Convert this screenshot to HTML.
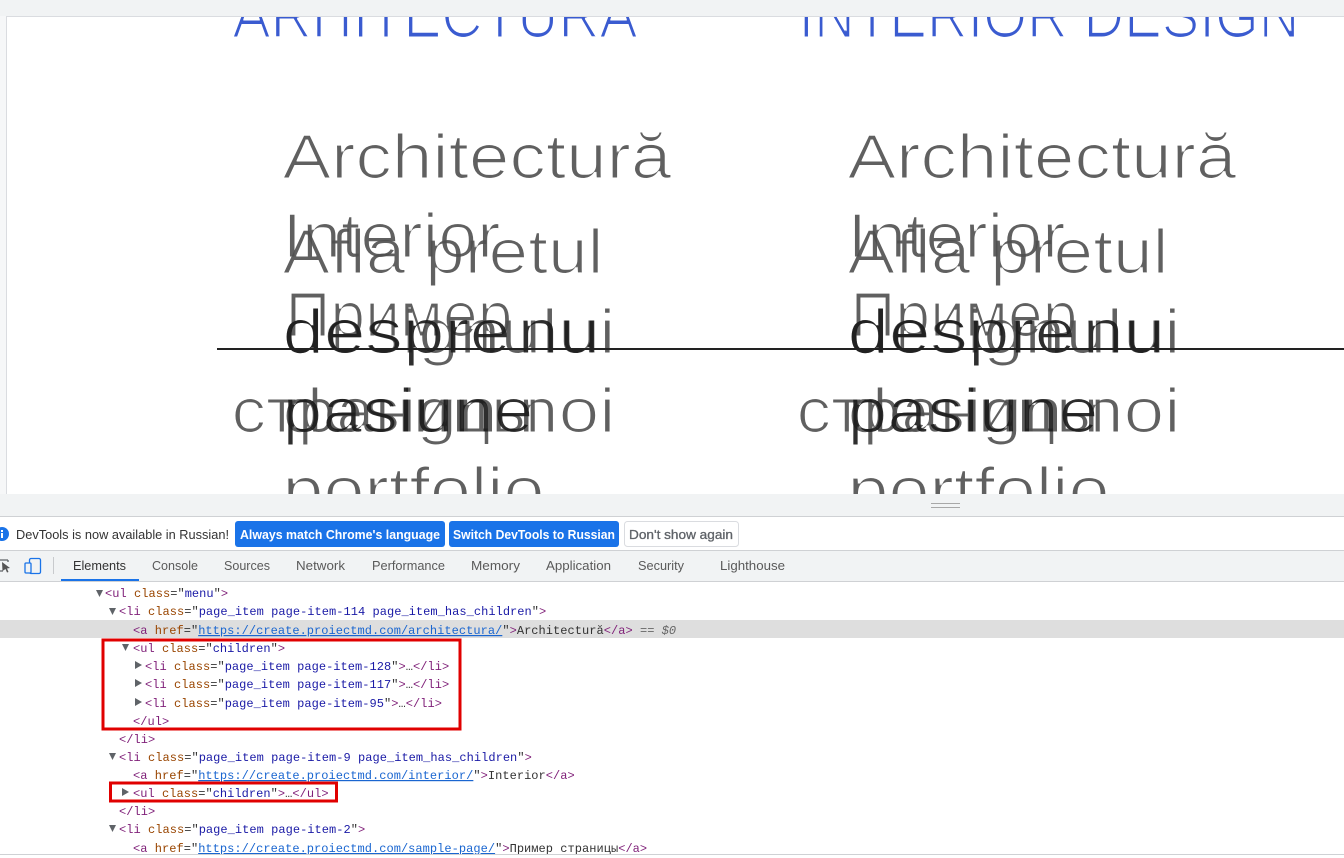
<!DOCTYPE html>
<html><head><meta charset="utf-8"><title>DevTools</title>
<style>
html,body{margin:0;padding:0;background:#fff;width:1344px;height:858px;overflow:hidden}
svg{display:block}
.g{font:62px "Liberation Sans","Noto Sans CJK JP",sans-serif;fill:#4f4f4f;fill-opacity:.9;filter:url(#thin)}
.d{font:62px "Liberation Sans",sans-serif;fill:#1c1c1c;fill-opacity:.92;filter:url(#thin);word-spacing:-12px}
.h{font:62px "Liberation Sans",sans-serif;fill:#3a5bd0;filter:url(#thin)}
.u{font:12.5px "Liberation Sans",sans-serif;fill:#333}
.t{font:12.5px "Liberation Sans",sans-serif;fill:#5a5a5a}
.b{font:bold 12.5px "Liberation Sans",sans-serif;fill:#fff}
.m{font:12px "Liberation Mono",monospace;fill:#333;letter-spacing:.04px;white-space:pre}
.p{fill:#7f1f78}.a{fill:#994500}.v{fill:#1a1aa6}.l{fill:#1a66d0;text-decoration:underline}
.tri{fill:#5f6368}
</style></head><body>
<svg width="1344" height="858" viewBox="0 0 1344 858" xmlns="http://www.w3.org/2000/svg">
<defs>
<filter id="thin" x="-5%" y="-20%" width="110%" height="140%" color-interpolation-filters="sRGB">
<feMorphology operator="erode" radius="1 0.5"/>
<feGaussianBlur stdDeviation="0.25"/>
</filter>
<clipPath id="c"><rect x="7" y="17" width="1337" height="477"/></clipPath>
</defs>
<rect width="1344" height="858" fill="#fff"/>
<rect width="1344" height="16" fill="#f1f3f4"/>
<rect y="16" width="1344" height="1" fill="#dadce0"/>
<rect x="0" y="16" width="6" height="478" fill="#f6f7f8"/>
<rect x="6" y="16" width="1" height="478" fill="#dadce0"/>
<g clip-path="url(#c)">
<g>
<text class="h" x="232.500" y="37" textLength="405" lengthAdjust="spacingAndGlyphs">ARHITECTURA</text>
<text class="g" x="282.500" y="178" textLength="389" lengthAdjust="spacingAndGlyphs">Architectură</text>
<text class="g" x="282.500" y="257" textLength="218" lengthAdjust="spacingAndGlyphs">Interior</text>
<text class="g" x="282.500" y="273" textLength="321" lengthAdjust="spacingAndGlyphs">Afla pretul</text>
<text class="g" x="285.500" y="336" textLength="227" lengthAdjust="spacingAndGlyphs">Пример</text>
<text class="g" x="282.500" y="353" textLength="333" lengthAdjust="spacingAndGlyphs">designului</text>
<text class="g" x="231.500" y="432" textLength="309" lengthAdjust="spacingAndGlyphs">страницы</text>
<text class="g" x="282.500" y="432" textLength="333" lengthAdjust="spacingAndGlyphs">design noi</text>
<text class="g" x="282.500" y="511" textLength="262" lengthAdjust="spacingAndGlyphs">portfolio</text>
<text class="d" x="282.500" y="353" textLength="318" lengthAdjust="spacingAndGlyphs">despre nu</text>
<text class="d" x="282.500" y="432" textLength="251" lengthAdjust="spacingAndGlyphs">pasiune</text>
</g>
<g>
<text class="h" x="798.500" y="37" textLength="501" lengthAdjust="spacingAndGlyphs">INTERIOR DESIGN</text>
<text class="g" x="847.500" y="178" textLength="389" lengthAdjust="spacingAndGlyphs">Architectură</text>
<text class="g" x="847.500" y="257" textLength="218" lengthAdjust="spacingAndGlyphs">Interior</text>
<text class="g" x="847.500" y="273" textLength="321" lengthAdjust="spacingAndGlyphs">Afla pretul</text>
<text class="g" x="850.500" y="336" textLength="227" lengthAdjust="spacingAndGlyphs">Пример</text>
<text class="g" x="847.500" y="353" textLength="333" lengthAdjust="spacingAndGlyphs">designului</text>
<text class="g" x="796.500" y="432" textLength="309" lengthAdjust="spacingAndGlyphs">страницы</text>
<text class="g" x="847.500" y="432" textLength="333" lengthAdjust="spacingAndGlyphs">design noi</text>
<text class="g" x="847.500" y="511" textLength="262" lengthAdjust="spacingAndGlyphs">portfolio</text>
<text class="d" x="847.500" y="353" textLength="318" lengthAdjust="spacingAndGlyphs">despre nu</text>
<text class="d" x="847.500" y="432" textLength="251" lengthAdjust="spacingAndGlyphs">pasiune</text>
</g>
<rect x="217" y="348" width="1127" height="2" fill="#222"/>
</g>
<rect y="494" width="1344" height="22" fill="#f1f3f4"/>
<rect x="931" y="503" width="29" height="1" fill="#a8a8a8"/>
<rect x="931" y="507" width="29" height="1" fill="#a8a8a8"/>
<rect y="516" width="1344" height="1" fill="#cfd1d4"/>

<circle cx="2" cy="534" r="7" fill="#1a73e8"/>
<rect x="1" y="533" width="2" height="5" fill="#fff"/><rect x="1" y="530" width="2" height="2" fill="#fff"/>
<text class="u" x="16" y="539" textLength="213" lengthAdjust="spacingAndGlyphs">DevTools is now available in Russian!</text>
<rect x="235" y="521" width="210" height="26" rx="3" fill="#1a73e8"/>
<text class="b" x="240" y="539" textLength="200" lengthAdjust="spacingAndGlyphs">Always match Chrome's language</text>
<rect x="449" y="521" width="170" height="26" rx="3" fill="#1a73e8"/>
<text class="b" x="453" y="539" textLength="162" lengthAdjust="spacingAndGlyphs">Switch DevTools to Russian</text>
<rect x="624.500" y="521.500" width="114" height="25" rx="3" fill="#fff" stroke="#dadce0"/>
<text class="t" x="629" y="539" textLength="104" lengthAdjust="spacingAndGlyphs" style="fill:#5f6368;stroke:#5f6368;stroke-width:.3px">Don't show again</text>

<rect y="550" width="1344" height="31" fill="#f1f3f4"/>
<rect y="550" width="1344" height="1" fill="#cfd1d4"/>
<rect y="581" width="1344" height="1" fill="#cfd1d4"/>
<path d="M0 560h8M8 560v2M0 571h3" stroke="#5f6368" stroke-width="1.300" fill="none"/>
<path d="M2 562l8 6-3 .5 1.500 3.500-1.500.5-1.500-3.500-3 2z" fill="#555"/>
<rect x="29.500" y="558.500" width="11" height="15" rx="1.500" fill="none" stroke="#1a73e8" stroke-width="1.300"/>
<rect x="25" y="563" width="6" height="10" rx="1" fill="#f1f3f4" stroke="#1a73e8" stroke-width="1.300"/>
<rect x="53" y="557" width="1" height="17" fill="#c8cacd"/>
<text class="t" x="73" y="570" textLength="53" lengthAdjust="spacingAndGlyphs" style="fill:#333">Elements</text>
<text class="t" x="152" y="570" textLength="46" lengthAdjust="spacingAndGlyphs">Console</text>
<text class="t" x="224" y="570" textLength="46" lengthAdjust="spacingAndGlyphs">Sources</text>
<text class="t" x="296" y="570" textLength="49" lengthAdjust="spacingAndGlyphs">Network</text>
<text class="t" x="372" y="570" textLength="73" lengthAdjust="spacingAndGlyphs">Performance</text>
<text class="t" x="471" y="570" textLength="49" lengthAdjust="spacingAndGlyphs">Memory</text>
<text class="t" x="546" y="570" textLength="65" lengthAdjust="spacingAndGlyphs">Application</text>
<text class="t" x="638" y="570" textLength="46" lengthAdjust="spacingAndGlyphs">Security</text>
<text class="t" x="720" y="570" textLength="65" lengthAdjust="spacingAndGlyphs">Lighthouse</text>
<rect x="61" y="579" width="78" height="2" fill="#1a73e8"/>

<rect y="620" width="1344" height="18" fill="#dedede"/>

<path class="tri" d="M96 590h7l-3.500 7z"/>
<text class="m" x="105" y="597"><tspan class="p">&lt;ul</tspan> <tspan class="a">class</tspan>="<tspan class="v">menu</tspan>"<tspan class="p">&gt;</tspan></text>
<path class="tri" d="M109 608h7l-3.500 7z"/>
<text class="m" x="119" y="615"><tspan class="p">&lt;li</tspan> <tspan class="a">class</tspan>="<tspan class="v">page_item page-item-114 page_item_has_children</tspan>"<tspan class="p">&gt;</tspan></text>
<text class="m" x="133" y="634"><tspan class="p">&lt;a</tspan> <tspan class="a">href</tspan>="<tspan class="l">https://create.proiectmd.com/architectura/</tspan>"<tspan class="p">&gt;</tspan>Architectură<tspan class="p">&lt;/a&gt;</tspan> <tspan fill="#666" font-style="italic">== $0</tspan></text>
<path class="tri" d="M122 644h7l-3.500 7z"/>
<text class="m" x="133" y="652"><tspan class="p">&lt;ul</tspan> <tspan class="a">class</tspan>="<tspan class="v">children</tspan>"<tspan class="p">&gt;</tspan></text>
<path class="tri" d="M135 661v8l7-4z"/>
<text class="m" x="145" y="670"><tspan class="p">&lt;li</tspan> <tspan class="a">class</tspan>="<tspan class="v">page_item page-item-128</tspan>"<tspan class="p">&gt;</tspan>…<tspan class="p">&lt;/li&gt;</tspan></text>
<path class="tri" d="M135 679v8l7-4z"/>
<text class="m" x="145" y="688"><tspan class="p">&lt;li</tspan> <tspan class="a">class</tspan>="<tspan class="v">page_item page-item-117</tspan>"<tspan class="p">&gt;</tspan>…<tspan class="p">&lt;/li&gt;</tspan></text>
<path class="tri" d="M135 698v8l7-4z"/>
<text class="m" x="145" y="707"><tspan class="p">&lt;li</tspan> <tspan class="a">class</tspan>="<tspan class="v">page_item page-item-95</tspan>"<tspan class="p">&gt;</tspan>…<tspan class="p">&lt;/li&gt;</tspan></text>
<text class="m" x="133" y="725"><tspan class="p">&lt;/ul&gt;</tspan></text>
<text class="m" x="119" y="743"><tspan class="p">&lt;/li&gt;</tspan></text>
<path class="tri" d="M109 753h7l-3.500 7z"/>
<text class="m" x="119" y="761"><tspan class="p">&lt;li</tspan> <tspan class="a">class</tspan>="<tspan class="v">page_item page-item-9 page_item_has_children</tspan>"<tspan class="p">&gt;</tspan></text>
<text class="m" x="133" y="779"><tspan class="p">&lt;a</tspan> <tspan class="a">href</tspan>="<tspan class="l">https://create.proiectmd.com/interior/</tspan>"<tspan class="p">&gt;</tspan>Interior<tspan class="p">&lt;/a&gt;</tspan></text>
<path class="tri" d="M122 788v8l7-4z"/>
<text class="m" x="133" y="797"><tspan class="p">&lt;ul</tspan> <tspan class="a">class</tspan>="<tspan class="v">children</tspan>"<tspan class="p">&gt;</tspan>…<tspan class="p">&lt;/ul&gt;</tspan></text>
<text class="m" x="119" y="815"><tspan class="p">&lt;/li&gt;</tspan></text>
<path class="tri" d="M109 825h7l-3.500 7z"/>
<text class="m" x="119" y="833"><tspan class="p">&lt;li</tspan> <tspan class="a">class</tspan>="<tspan class="v">page_item page-item-2</tspan>"<tspan class="p">&gt;</tspan></text>
<text class="m" x="133" y="852"><tspan class="p">&lt;a</tspan> <tspan class="a">href</tspan>="<tspan class="l">https://create.proiectmd.com/sample-page/</tspan>"<tspan class="p">&gt;</tspan>Пример страницы<tspan class="p">&lt;/a&gt;</tspan></text>
<rect y="854" width="1344" height="4" fill="#fff"/>
<rect y="854" width="1344" height="1" fill="#cfd1d4"/>

<rect x="103" y="640" width="357" height="89" fill="none" stroke="#e00000" stroke-width="3"/>
<rect x="110.500" y="783" width="226" height="18" fill="none" stroke="#e00000" stroke-width="3"/>
</svg>
</body></html>
